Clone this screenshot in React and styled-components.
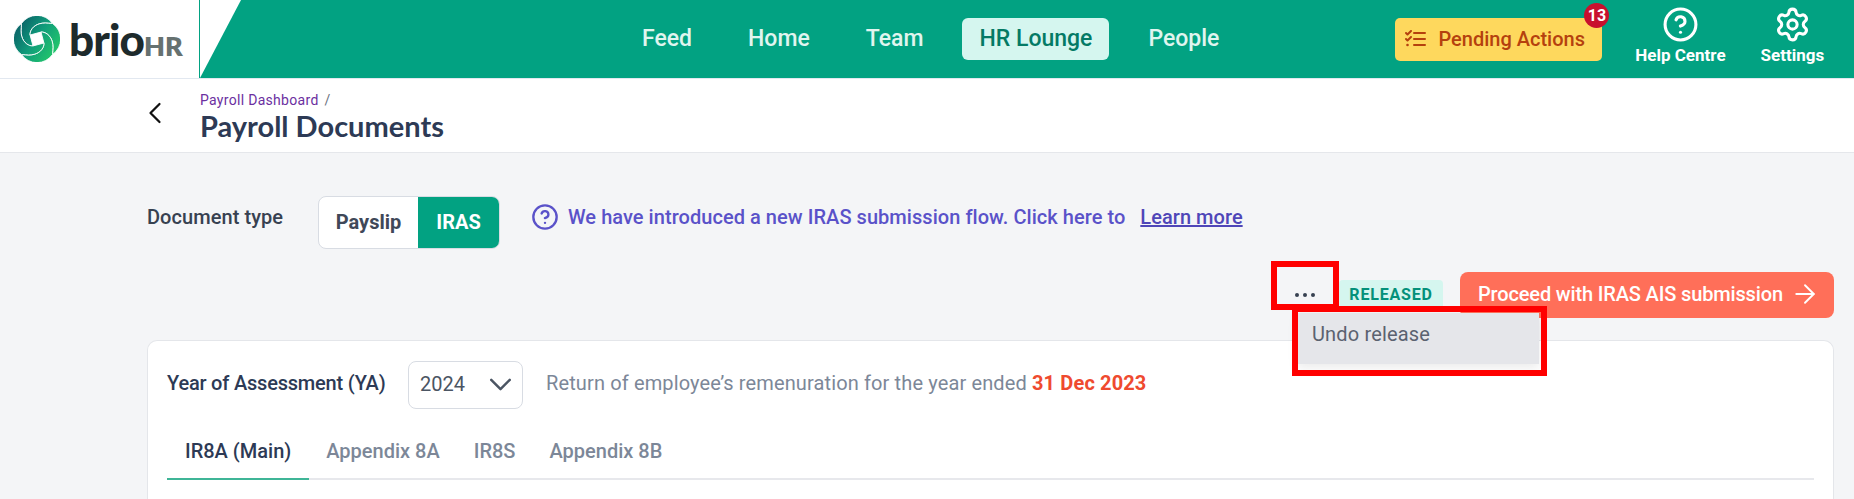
import React from "react"
import styled, { createGlobalStyle } from "styled-components"
import { ArrowRight, ChevronDown, ChevronLeft, CircleHelp, Settings } from "lucide-react"

const Global = createGlobalStyle`
  html, body {
    margin: 0;
    height: 100%;
    overflow: hidden;
    background: #f4f5f7;
    font-family: Roboto, "Liberation Sans", sans-serif;
  }
  * { box-sizing: border-box; }
`

const Page = styled.div`
  position: relative;
  height: 499px;
  overflow: hidden;
`

const Header = styled.header`
  display: flex;
  height: 79px;
  background: #fff;
  border-bottom: 1px solid #e2e8f0;
`

const LogoBox = styled.div`
  flex: 0 0 199px;
  display: flex;
  align-items: center;
  gap: 9px;
  padding-left: 14px;
`

const LogoText = styled.span`
  font-family: Lato, sans-serif;
  font-weight: 900;
  font-size: 44px;
  letter-spacing: -0.9px;
  color: #1d2a2c;
  line-height: 1;
`

const LogoHr = styled.span`
  font-family: Lato, sans-serif;
  font-weight: 800;
  font-size: 27px;
  letter-spacing: 0;
  color: #667170;
`

const GreenBar = styled.div`
  flex: 1;
  display: flex;
  align-items: center;
  background: #02a282;
  border-left: 1px solid #02a282;
  position: relative;
`

const Slant = styled.div`
  position: absolute;
  left: 0;
  top: 0;
  width: 41px;
  height: 78px;
  background: #fff;
  clip-path: polygon(0 0, 100% 0, 0 100%);
`

const Nav = styled.nav`
  display: flex;
  align-items: center;
  gap: 22px;
  margin-left: 425px;
`

const NavItem = styled.a`
  display: block;
  padding: 0 17px;
  height: 42px;
  line-height: 42px;
  border-radius: 6px;
  font-size: 23px;
  font-weight: 500;
  color: ${p => (p.$active ? "#047a65" : "#e0f5ef")};
  background: ${p => (p.$active ? "#d5f6ef" : "transparent")};
`

const Pending = styled.button`
  position: relative;
  display: flex;
  align-items: center;
  gap: 12px;
  width: 207px;
  height: 43px;
  margin-left: 159px;
  padding: 0 0 0 10px;
  border: 0;
  border-radius: 5px;
  background: #fed85d;
  color: #b5410e;
  font: 500 20px Roboto, sans-serif;
`

const Badge = styled.span`
  position: absolute;
  right: -7px;
  top: -15px;
  width: 25px;
  height: 25px;
  border-radius: 50%;
  background: #c8102e;
  color: #fff;
  font-size: 16px;
  font-weight: 700;
  line-height: 25px;
  text-align: center;
`

const ToolLink = styled.a`
  display: flex;
  flex-direction: column;
  align-items: center;
  width: ${p => p.$w}px;
  margin-left: ${p => p.$ml}px;
  color: #fff;
  font-size: 17px;
  font-weight: 700;
  line-height: 19px;
  white-space: nowrap;
  gap: 3px;
  padding-bottom: 8px;
`

const SubHeader = styled.div`
  display: flex;
  align-items: center;
  height: 74px;
  background: #fff;
  border-bottom: 1px solid #e5e7eb;
`

const Back = styled.span`
  display: flex;
  width: 63px;
  margin: 0 0 5px 137px;
  color: #111;
`

const Crumbs = styled.div`
  display: flex;
  flex-direction: column;
  padding-top: 3px;
`

const Crumb = styled.div`
  font-size: 14px;
  line-height: 16px;
  letter-spacing: 0.3px;
  color: #6b2fa0;

  span {
    margin-left: 6px;
    color: #6b7280;
  }
`

const Title = styled.h1`
  margin: 2px 0 0;
  font-family: Lato, sans-serif;
  font-size: 29px;
  line-height: 32px;
  font-weight: 700;
  color: #2d3a55;
`

const Content = styled.main`
  padding: 43px 20px 0 147px;
`

const TypeRow = styled.div`
  display: flex;
  align-items: center;
  height: 53px;
`

const TypeLabel = styled.span`
  width: 171px;
  padding-bottom: 12px;
  font-size: 20px;
  font-weight: 500;
  letter-spacing: 0.06px;
  color: #374151;
`

const Toggle = styled.div`
  display: flex;
  width: 182px;
  height: 53px;
  border: 1px solid #d8dce3;
  border-radius: 8px;
  background: #fff;
  overflow: hidden;
`

const ToggleItem = styled.span`
  display: flex;
  align-items: center;
  justify-content: center;
  flex: 0 0 ${p => p.$w}px;
  padding-bottom: 2px;
  font-size: 20px;
  font-weight: 700;
  color: ${p => (p.$active ? "#fff" : "#3f4858")};
  background: ${p => (p.$active ? "#02a282" : "transparent")};
`

const Notice = styled.div`
  display: flex;
  align-items: center;
  gap: 9px;
  margin-left: 31px;
  padding-bottom: 12px;
  font-size: 20px;
  font-weight: 500;
  letter-spacing: 0.05px;
  color: #5a52c9;

  a {
    margin-left: 15px;
    color: #4f46b8;
    text-decoration: underline;
  }
`

const Actions = styled.div`
  display: flex;
  justify-content: flex-end;
  align-items: center;
  margin-top: 22px;
  height: 47px;
`

const MoreWrap = styled.div`
  position: relative;
  display: flex;
  justify-content: center;
  width: 68px;
`

const Dots = styled.span`
  display: flex;
  gap: 4px;

  i {
    width: 4px;
    height: 4px;
    border-radius: 50%;
    background: #374151;
  }
`

const Menu = styled.div`
  position: absolute;
  left: 26px;
  top: 20px;
  width: 242px;
  height: 51px;
  padding: 8px 15px;
  background: #e5e6ea;
  box-shadow: 0 4px 10px rgba(0, 0, 0, 0.08);
  font-size: 20px;
  line-height: 26px;
  letter-spacing: 0.15px;
  color: #5b6270;
  z-index: 2;
`

const Released = styled.span`
  display: flex;
  align-items: center;
  justify-content: center;
  width: 104px;
  height: 30px;
  margin-right: 17px;
  border-radius: 4px;
  background: #d5f6ef;
  color: #04907a;
  font-size: 16px;
  font-weight: 700;
  letter-spacing: 0.8px;
`

const Proceed = styled.button`
  display: flex;
  align-items: center;
  gap: 7px;
  width: 374px;
  height: 46px;
  padding: 0 0 2px 18px;
  border: 0;
  border-radius: 8px;
  background: #ff6f59;
  color: #fff;
  font: 500 20px Roboto, sans-serif;
  letter-spacing: -0.15px;
`

const Card = styled.section`
  margin-top: 22px;
  height: 159px;
  padding: 20px 19px 0;
  background: #fff;
  border: 1px solid #e4e6ea;
  border-bottom: 0;
  border-radius: 10px 10px 0 0;
`

const YearRow = styled.div`
  display: flex;
  align-items: center;
  height: 48px;
`

const YearLabel = styled.span`
  width: 241px;
  padding-bottom: 4px;
  font-size: 20px;
  font-weight: 500;
  letter-spacing: -0.2px;
  color: #2d3a55;
`

const YearSelect = styled.div`
  display: flex;
  align-items: center;
  justify-content: space-between;
  width: 115px;
  height: 48px;
  padding: 0 3px 2px 11px;
  border: 1px solid #d8dce3;
  border-radius: 8px;
  font-size: 20px;
  color: #4b5563;
`

const YearNote = styled.span`
  margin-left: 23px;
  padding-bottom: 4px;
  font-size: 20px;
  letter-spacing: 0.13px;
  color: #7c8798;

  b {
    font-weight: 700;
    color: #ef4a2f;
  }
`

const Tabs = styled.div`
  display: flex;
  margin-top: 21px;
  border-bottom: 2px solid #e7e8ec;
`

const Tab = styled.span`
  height: 50px;
  padding: 0 ${p => p.$pad}px;
  font-size: 20px;
  font-weight: 500;
  line-height: 43px;
  color: ${p => (p.$active ? "#2d3a55" : "#7c8798")};
  border-bottom: 2px solid ${p => (p.$active ? "#3fb597" : "transparent")};
  margin-bottom: -2px;
`

const RedBox = styled.div`
  position: absolute;
  left: ${p => p.$x}px;
  top: ${p => p.$y}px;
  width: ${p => p.$w}px;
  height: ${p => p.$h}px;
  border: 6px solid #ff0000;
  z-index: 5;
  pointer-events: none;
`

// one swirl blade: outer lobe, then a spiral into the hole and back out along the neighbour
const polar = (angle, r) => {
  const a = (angle * Math.PI) / 180
  return `${(23 + r * Math.cos(a)).toFixed(2)} ${(23 + r * Math.sin(a)).toFixed(2)}`
}

const spiral = (start, outer, inner, sweep) => {
  const pts = []
  for (let i = 0; i <= 12; i++) {
    const t = i / 12
    pts.push(polar(start - sweep * t, outer - (outer - inner) * Math.pow(t, 0.7)))
  }
  return pts
}

const bladePath = a => {
  const forward = spiral(a + 90, 22, 8, 105)
  const back = spiral(a, 22, 8, 105).reverse()
  return `M${polar(a, 22)} A19 19 0 0 1 ${forward.join(" L")} L${back.join(" L")} Z`
}

const LogoMark = () => (
  <svg width="46" height="46" viewBox="0 0 46 46">
    <defs>
      <linearGradient id="swirl" gradientUnits="userSpaceOnUse" x1="3" y1="16" x2="38" y2="40">
        <stop offset="0" stopColor="#0c6b6b" />
        <stop offset="0.45" stopColor="#0f9b7a" />
        <stop offset="1" stopColor="#22c46c" />
      </linearGradient>
    </defs>
    {[-135, -45, 45, 135].map(a => (
      <path key={a} d={bladePath(a)} fill="url(#swirl)" stroke="#fff" strokeWidth="0.9" />
    ))}
  </svg>
)

const PendingIcon = () => (
  <svg width="21" height="18" viewBox="0 0 21 18" fill="none" stroke="currentColor" strokeWidth="2" strokeLinecap="round" strokeLinejoin="round">
    <path d="M9 3h11M9 9h11M9 15h11" />
    <path d="M1 3l1.500 1.500L6 1" />
    <path d="M1 9l1.500 1.500L6 7" />
    <circle cx="2.500" cy="15" r="1.300" fill="currentColor" stroke="none" />
  </svg>
)

export default function App() {
  return (
    <Page>
      <Global />
      <Header>
        <LogoBox>
          <LogoMark />
          <LogoText>
            brio<LogoHr>HR</LogoHr>
          </LogoText>
        </LogoBox>
        <GreenBar>
          <Slant />
          <Nav>
            <NavItem>Feed</NavItem>
            <NavItem>Home</NavItem>
            <NavItem>Team</NavItem>
            <NavItem $active>HR Lounge</NavItem>
            <NavItem>People</NavItem>
          </Nav>
          <Pending>
            <PendingIcon />
            Pending Actions
            <Badge>13</Badge>
          </Pending>
          <ToolLink $w={92} $ml={32}>
            <CircleHelp size={37} strokeWidth={2} />
            Help Centre
          </ToolLink>
          <ToolLink $w={64} $ml={34}>
            <Settings size={37} strokeWidth={2} />
            Settings
          </ToolLink>
        </GreenBar>
      </Header>
      <SubHeader>
        <Back>
          <ChevronLeft size={36} strokeWidth={1.5} />
        </Back>
        <Crumbs>
          <Crumb>
            Payroll Dashboard<span>/</span>
          </Crumb>
          <Title>Payroll Documents</Title>
        </Crumbs>
      </SubHeader>
      <Content>
        <TypeRow>
          <TypeLabel>Document type</TypeLabel>
          <Toggle>
            <ToggleItem $w={99}>Payslip</ToggleItem>
            <ToggleItem $w={81} $active>
              IRAS
            </ToggleItem>
          </Toggle>
          <Notice>
            <CircleHelp size={28} strokeWidth={2} />
            <span>
              We have introduced a new IRAS submission flow. Click here to<a>Learn more</a>
            </span>
          </Notice>
        </TypeRow>
        <Actions>
          <MoreWrap>
            <Dots>
              <i />
              <i />
              <i />
            </Dots>
            <Menu>Undo release</Menu>
          </MoreWrap>
          <Released>RELEASED</Released>
          <Proceed>
            Proceed with IRAS AIS submission
            <ArrowRight size={30} strokeWidth={1.5} />
          </Proceed>
        </Actions>
        <Card>
          <YearRow>
            <YearLabel>Year of Assessment (YA)</YearLabel>
            <YearSelect>
              2024
              <ChevronDown size={37} strokeWidth={1.6} />
            </YearSelect>
            <YearNote>
              Return of employee’s remenuration for the year ended <b>31 Dec 2023</b>
            </YearNote>
          </YearRow>
          <Tabs>
            <Tab $active $pad={18}>
              IR8A (Main)
            </Tab>
            <Tab $pad={17}>Appendix 8A</Tab>
            <Tab $pad={17}>IR8S</Tab>
            <Tab $pad={17}>Appendix 8B</Tab>
          </Tabs>
        </Card>
      </Content>
      <RedBox $x={1271} $y={261} $w={68} $h={49} />
      <RedBox $x={1292} $y={306} $w={255} $h={70} />
    </Page>
  )
}
